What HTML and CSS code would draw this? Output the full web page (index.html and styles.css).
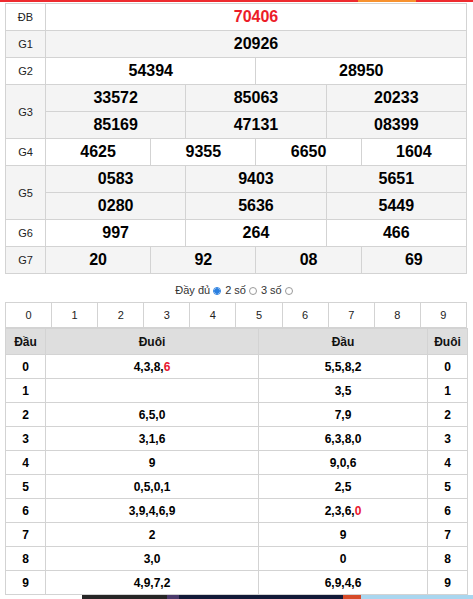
FILE: index.html
```html
<!DOCTYPE html>
<html lang="vi">
<head>
<meta charset="utf-8">
<link rel="stylesheet" href="styles.css">
</head>
<body>
<div class="topbar"></div>
<div class="wrap">
  <table class="kq">
    <colgroup>
      <col class="c-lbl">
      <col><col><col><col><col><col><col><col><col><col><col><col>
    </colgroup>
    <tr class="w">
      <td class="lbl">ĐB</td>
      <td colspan="12" class="num db">70406</td>
    </tr>
    <tr class="g">
      <td class="lbl">G1</td>
      <td colspan="12" class="num">20926</td>
    </tr>
    <tr class="w">
      <td class="lbl">G2</td>
      <td colspan="6" class="num">54394</td>
      <td colspan="6" class="num">28950</td>
    </tr>
    <tr class="g">
      <td class="lbl" rowspan="2">G3</td>
      <td colspan="4" class="num">33572</td>
      <td colspan="4" class="num">85063</td>
      <td colspan="4" class="num">20233</td>
    </tr>
    <tr class="g">
      <td colspan="4" class="num">85169</td>
      <td colspan="4" class="num">47131</td>
      <td colspan="4" class="num">08399</td>
    </tr>
    <tr class="w">
      <td class="lbl">G4</td>
      <td colspan="3" class="num">4625</td>
      <td colspan="3" class="num">9355</td>
      <td colspan="3" class="num">6650</td>
      <td colspan="3" class="num">1604</td>
    </tr>
    <tr class="g">
      <td class="lbl" rowspan="2">G5</td>
      <td colspan="4" class="num">0583</td>
      <td colspan="4" class="num">9403</td>
      <td colspan="4" class="num">5651</td>
    </tr>
    <tr class="g">
      <td colspan="4" class="num">0280</td>
      <td colspan="4" class="num">5636</td>
      <td colspan="4" class="num">5449</td>
    </tr>
    <tr class="w">
      <td class="lbl">G6</td>
      <td colspan="4" class="num">997</td>
      <td colspan="4" class="num">264</td>
      <td colspan="4" class="num">466</td>
    </tr>
    <tr class="g">
      <td class="lbl">G7</td>
      <td colspan="3" class="num">20</td>
      <td colspan="3" class="num">92</td>
      <td colspan="3" class="num">08</td>
      <td colspan="3" class="num">69</td>
    </tr>
  </table>

  <div class="opts">
    <span>Đầy đủ</span><span class="radio on"></span>
    <span>2 số</span><span class="radio"></span>
    <span>3 số</span><span class="radio"></span>
  </div>

  <table class="digits">
    <tr>
      <td>0</td><td>1</td><td>2</td><td>3</td><td>4</td>
      <td>5</td><td>6</td><td>7</td><td>8</td><td>9</td>
    </tr>
  </table>

  <table class="loto">
    <colgroup>
      <col class="c1"><col class="c2"><col class="c3"><col class="c4">
    </colgroup>
    <tr class="hd">
      <th>Đầu</th><th>Đuôi</th><th>Đầu</th><th>Đuôi</th>
    </tr>
    <tr><td>0</td><td>4,3,8,<span class="red">6</span></td><td>5,5,8,2</td><td>0</td></tr>
    <tr><td>1</td><td></td><td>3,5</td><td>1</td></tr>
    <tr><td>2</td><td>6,5,0</td><td>7,9</td><td>2</td></tr>
    <tr><td>3</td><td>3,1,6</td><td>6,3,8,0</td><td>3</td></tr>
    <tr><td>4</td><td>9</td><td>9,0,6</td><td>4</td></tr>
    <tr><td>5</td><td>0,5,0,1</td><td>2,5</td><td>5</td></tr>
    <tr><td>6</td><td>3,9,4,6,9</td><td>2,3,6,<span class="red">0</span></td><td>6</td></tr>
    <tr><td>7</td><td>2</td><td>9</td><td>7</td></tr>
    <tr><td>8</td><td>3,0</td><td>0</td><td>8</td></tr>
    <tr><td>9</td><td>4,9,7,2</td><td>6,9,4,6</td><td>9</td></tr>
  </table>

  <div class="banner">
    <span class="b1"></span><span class="b2"></span><span class="b3"></span><span class="b4"></span><span class="b5"></span>
  </div>
</div>
</body>
</html>
```

FILE: styles.css
```css
html, body {
  margin: 0;
  padding: 0;
  background: #fff;
}

body {
  font-family: "Liberation Sans", Arial, sans-serif;
  color: #222;
  overflow: hidden;
}

.topbar {
  height: 2px;
  background: linear-gradient(to right, #ee2b2f 0, #ee2b2f 358px, #f7922f 358px, #f7922f 416px, #ee2b2f 416px);
  margin-bottom: 1px;
}

.wrap {
  padding: 0 6px 0 5px;
}

table {
  border-collapse: collapse;
  table-layout: fixed;
  width: 462px;
}

td, th {
  border: 1px solid #d3d3d3;
  padding: 0;
  text-align: center;
}

/* results table */
.kq .c-lbl { width: 40px; }

.kq tr { height: 27px; }

.kq tr.w td { background: #fff; }
.kq tr.g td { background: #f4f4f4; }

.kq .lbl {
  font-size: 11px;
  color: #222;
}

.kq .num {
  font-size: 16px;
  font-weight: bold;
  color: #000;
}

.kq .num.db {
  color: #ec1c28;
  font-weight: bold;
}

/* options */
.opts {
  display: flex;
  justify-content: center;
  align-items: center;
  font-size: 11px;
  color: #333;
  height: 16px;
  padding: 8px 0 4px;
}

.radio {
  display: inline-block;
  box-sizing: border-box;
  width: 8px;
  height: 8px;
  border: 1px solid #9a9a9a;
  border-radius: 50%;
  margin: 1px 4px 0 3px;
  background: #fff;
}

.radio.on {
  border-color: #2a7fe0;
  background: radial-gradient(circle, #2a7fe0 0, #2a7fe0 2.5px, #fff 3px);
}

/* digits row */
.digits tr { height: 25px; }

.digits td {
  font-size: 11px;
  color: #222;
  background: #fff;
}

/* loto table */
.loto .c1 { width: 40px; }
.loto .c2 { width: 213px; }
.loto .c3 { width: 169px; }
.loto .c4 { width: 40px; }

.loto tr.hd { height: 26px; }

.loto th {
  background: #dedede;
  font-size: 12px;
  font-weight: bold;
  color: #111;
}

.loto tr { height: 24px; }

.loto td {
  font-size: 12px;
  font-weight: bold;
  color: #000;
  background: #fff;
}

.red { color: #e8162e; }

/* bottom banner strip */
.banner {
  display: flex;
  height: 6px;
  margin-left: 77px;
  margin-right: -6px;
}

.banner span { display: block; height: 100%; }
.banner .b1 { width: 85px; background: #262626; }
.banner .b2 { width: 12px; background: #4a3a6a; }
.banner .b3 { width: 164px; background: #121a38; }
.banner .b4 { width: 18px; background: #d64a28; }
.banner .b5 { flex: 1; background: #a9d6ef; }
```
